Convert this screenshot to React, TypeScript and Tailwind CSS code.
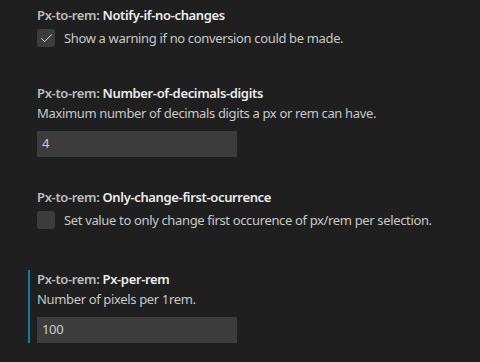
import { Check } from 'lucide-react'

type Setting = {
  name: string
  description: string
  kind: 'checkbox' | 'number'
  checked?: boolean
  value?: string
  focused?: boolean
}

const SETTINGS: Setting[] = [
  { name: 'Notify-if-no-changes', description: 'Show a warning if no conversion could be made.', kind: 'checkbox', checked: true },
  { name: 'Number-of-decimals-digits', description: 'Maximum number of decimals digits a px or rem can have.', kind: 'number', value: '4' },
  { name: 'Only-change-first-ocurrence', description: 'Set value to only change first occurence of px/rem per selection.', kind: 'checkbox', checked: false },
  { name: 'Px-per-rem', description: 'Number of pixels per 1rem.', kind: 'number', value: '100', focused: true },
]

function SettingItem({ s }: { s: Setting }) {
  return (
    <div className={`ml-[28px] pl-[7px] border-l-2 ${s.focused ? 'border-[#0e7ca0]' : 'border-transparent'}`}>
      <div className="h-[18px] leading-[18px] whitespace-nowrap">
        <span className="text-[#bdbdbd] font-semibold">Px-to-rem: </span>
        <span className="text-[#ececec] font-semibold">{s.name}</span>
      </div>
      {s.kind === 'checkbox' ? (
        <div className="flex items-center mt-[5px] h-[18px]">
          <div className="w-[18px] h-[18px] rounded-[3px] bg-[#3c3c3c] flex items-center justify-center">
            {s.checked && <Check size={15} strokeWidth={1.5} className="text-[#f0f0f0]" />}
          </div>
          <span className="ml-[9px] text-[#c8c8c8] leading-[18px] whitespace-nowrap">{s.description}</span>
        </div>
      ) : (
        <>
          <div className="mt-[2px] h-[18px] leading-[18px] text-[#c8c8c8] whitespace-nowrap">{s.description}</div>
          <div className="mt-[9px] w-[200px] h-[26px] bg-[#3c3c3c] flex items-center pl-[5px] text-[#cccccc]">
            {s.value}
          </div>
        </>
      )}
    </div>
  )
}

export default function App() {
  return (
    <div
      className="w-[480px] h-[362px] bg-[#1f1f1f] overflow-hidden text-[13px] tracking-[-0.35px]"
      style={{ fontFamily: '"Noto Sans", "Open Sans", sans-serif' }}
    >
      <div className="pt-[6px]">
        <SettingItem s={SETTINGS[0]} />
      </div>
      <div className="pt-[37px]">
        <SettingItem s={SETTINGS[1]} />
      </div>
      <div className="pt-[31px]">
        <SettingItem s={SETTINGS[2]} />
      </div>
      <div className="pt-[41px]">
        <SettingItem s={SETTINGS[3]} />
      </div>
    </div>
  )
}
